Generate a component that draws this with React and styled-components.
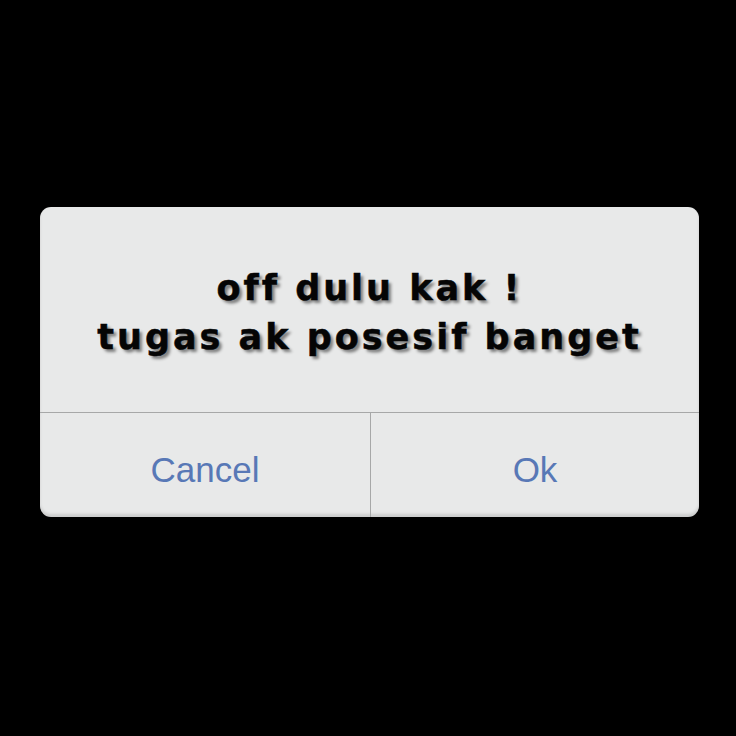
import React from "react";
import styled, { createGlobalStyle } from "styled-components";

const Global = createGlobalStyle`
  html, body { margin: 0; padding: 0; background: #000; }
  body { width: 736px; height: 736px; overflow: hidden; }
`;

const Stage = styled.div`
  width: 736px;
  height: 736px;
  background: #000;
  padding: 207px 0 0 40px;
  box-sizing: border-box;
`;

const Dialog = styled.div`
  width: 659px;
  height: 310px;
  border-radius: 11px;
  background: #e8e9e9;
  display: grid;
  grid-template-rows: 205px 1fr;
  overflow: hidden;
  box-shadow: inset 0 -3px 3px rgba(0, 0, 0, 0.12);
`;

const Message = styled.div`
  display: flex;
  flex-direction: column;
  align-items: center;
  justify-content: center;
  padding-top: 6px;
  font-family: "DejaVu Sans", sans-serif;
  font-weight: 700;
  font-size: 35px;
  line-height: 49px;
  letter-spacing: 3px;
  color: #050505;
  -webkit-text-stroke: 0.5px #050505;
  text-shadow: 3px 3px 3px rgba(0, 0, 0, 0.45);
`;

const Actions = styled.div`
  display: grid;
  grid-template-columns: 330px 1fr;
  border-top: 1.5px solid #a7a8a8;
`;

const Action = styled.div`
  display: flex;
  align-items: center;
  justify-content: center;
  padding-top: 10px;
  font-family: "Liberation Sans", Arial, sans-serif;
  font-size: 35px;
  color: #5878b6;
  border-left: ${(p) => (p.$divided ? "1.5px solid #a7a8a8" : "none")};
`;

export default function App() {
  return (
    <>
      <Global />
      <Stage>
        <Dialog>
          <Message>
            <span>off dulu kak !</span>
            <span>tugas ak posesif banget</span>
          </Message>
          <Actions>
            <Action>Cancel</Action>
            <Action $divided>Ok</Action>
          </Actions>
        </Dialog>
      </Stage>
    </>
  );
}
